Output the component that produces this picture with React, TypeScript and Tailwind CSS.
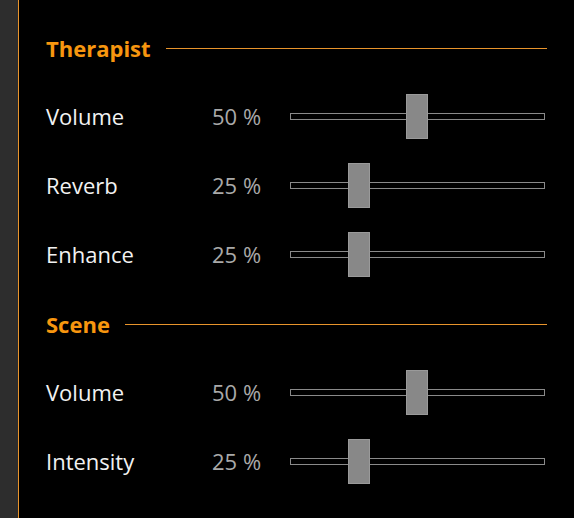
const SECTIONS = [
  {
    title: 'Therapist',
    rows: [
      { label: 'Volume', value: 50 },
      { label: 'Reverb', value: 25 },
      { label: 'Enhance', value: 25 },
    ],
  },
  {
    title: 'Scene',
    rows: [
      { label: 'Volume', value: 50 },
      { label: 'Intensity', value: 25 },
    ],
  },
];

function Slider({ value }: { value: number }) {
  // thumb travels across track width minus its own width
  const left = Math.floor((value / 100) * 232);
  return (
    <div className="relative w-[255px] h-[45px] flex items-center">
      <div className="w-full h-[7px] border border-[#8a8a8a] bg-black" />
      <div
        className="absolute top-0 w-[22px] h-[45px] bg-[#888888] border border-[#9a9a9a]"
        style={{ left }}
      />
    </div>
  );
}

export default function App() {
  return (
    <div
      className="flex w-[574px] h-[518px] bg-black overflow-hidden"
      style={{ fontFamily: '"Open Sans", "Noto Sans", sans-serif' }}
    >
      <div className="w-[18px] shrink-0 bg-[#2d2d2d]" />
      <div className="flex-1 border-l border-[#e8942c] pt-[13px] pl-[27px] pr-[27px]">
        {SECTIONS.map((section) => (
          <div key={section.title}>
            <div className="h-[69px] flex items-center gap-[15px]">
              <span className="text-[22px] leading-[30px] font-bold text-[#f7960f]">{section.title}</span>
              <div className="flex-1 h-0 mt-[2px] border-t border-[#e8942c]" />
            </div>
            {section.rows.map((row, i) => (
              <div key={i} className="h-[69px] flex items-center">
                <span className="w-[166px] text-[22px] text-[#f2f2f2]">{row.label}</span>
                <span className="w-[78px] text-[22px] text-[#a9a9a9]">{row.value} %</span>
                <Slider value={row.value} />
              </div>
            ))}
          </div>
        ))}
      </div>
    </div>
  );
}
